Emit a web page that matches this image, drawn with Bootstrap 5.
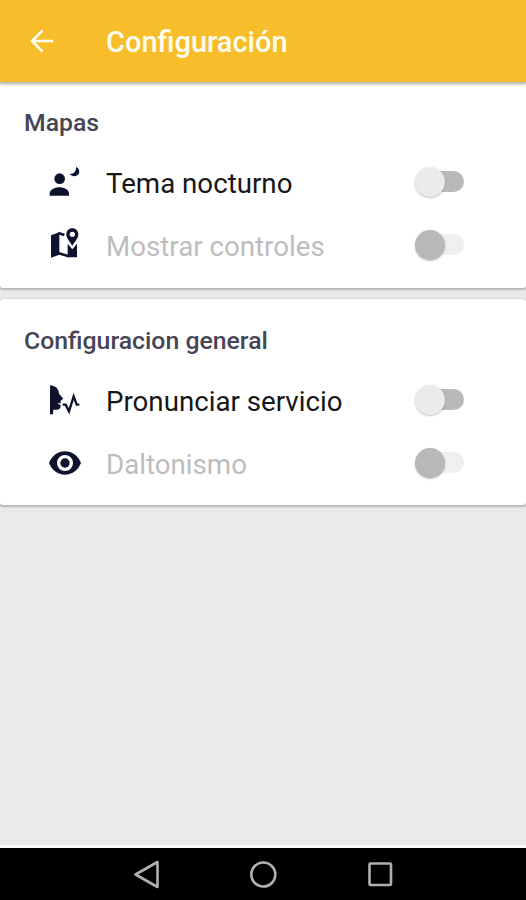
<!DOCTYPE html>
<html lang="es">
<head>
<meta charset="utf-8">
<meta name="viewport" content="width=device-width, initial-scale=1">
<title>Configuración</title>
<link href="https://cdn.jsdelivr.net/npm/bootstrap@5.3.0/dist/css/bootstrap.min.css" rel="stylesheet">
<style>
body{font-family:Roboto,sans-serif;background:#eaeaea;color:#171717;overflow:hidden}
.app-bar{height:82px;background:#f7bd2b;box-shadow:0 1px 3px 1px rgba(0,0,0,.33);padding:2px 0 0 24px;z-index:1}
.app-bar svg{width:36px;height:36px;margin-right:46px}
.app-title{font-size:29px;font-weight:500;color:#fffdf0;line-height:40px}
.settings{border:0;border-radius:3px;height:206px;padding-top:14px;box-shadow:0 1px 2px 1px rgba(0,0,0,.22)}
.settings-first{border-radius:0 0 3px 3px}
.settings + .settings{margin-top:11px;padding-top:15px}
.group-title{font-size:24.8px;font-weight:500;line-height:53px;height:55px;color:#454555;padding-left:24px}
.setting{height:63px;padding-left:46px;padding-right:62px}
.setting svg{width:36px;height:36px;margin-right:24px;fill:#0d132f;stroke:#0d132f;stroke-width:0}
.setting-label{font-size:27.7px;line-height:40px;padding-top:3px}
.setting.is-off{color:#bdbdbd}
.toggle{width:49px;height:31px;padding:5px 0 5px 8px;margin-bottom:2px;border:0;background:none}
.toggle-track{width:41px;height:21px;border-radius:11px;background:#b9b9b9}
.toggle-thumb{flex:none;width:30px;height:30px;margin-left:-8px;border-radius:50%;background:#ebebeb;box-shadow:0 1px 2px rgba(0,0,0,.25)}
.is-off .toggle-track{background:#efefef}
.is-off .toggle-thumb{background:#b8b8b8}
.sys-bar{height:55px;background:#000;border-top:3px solid #fafafa}
.sys-bar svg{width:100%;height:52px;fill:none;stroke:#b0b0b0;stroke-width:2.6}
</style>
</head>
<body class="d-flex flex-column vh-100">
<header class="app-bar d-flex align-items-center flex-shrink-0 position-relative">
  <svg viewBox="0 0 36 36" fill="none" stroke="#fffdf0" stroke-width="2.5" aria-hidden="true"><path d="M29 17H8M18.500 6.500L8 17l10.500 10.500"/></svg>
  <h1 class="app-title mb-0">Configuración</h1>
</header>
<main class="flex-grow-1">
  <section class="card settings settings-first">
    <h2 class="group-title mb-0">Mapas</h2>
    <div class="setting d-flex align-items-center">
      <svg viewBox="18 16 108 108" aria-hidden="true"><circle cx="59" cy="57" r="16"/><path d="M29 108v-6c0-12 15-19 29-19s29 7 29 19v6Z"/><path d="M108 22c12 5 13 19 4 25-8 5-19 2-23-5 12 2 20-7 19-20Z"/></svg>
      <span class="setting-label">Tema nocturno</span>
      <button class="toggle d-flex align-items-center ms-auto" type="button" role="switch" aria-checked="false" aria-label="Tema nocturno"><span class="toggle-track d-flex align-items-center"><span class="toggle-thumb"></span></span></button>
    </div>
    <div class="setting is-off d-flex align-items-center">
      <svg viewBox="21 22 108 108" aria-hidden="true"><path d="M36 44L61 35V102L36 111Z"/><path d="M58 37L76 43M59 98L90 107" fill="none" stroke-width="8"/><path d="M86 69l14 17 14-17v41H86Z"/><path fill-rule="evenodd" d="M100 20c-11 0-18 8-18 18 0 12 11 22 18 35 7-13 18-23 18-35 0-10-7-18-18-18Zm0 10a8 8 0 1 1 0 16 8 8 0 0 1 0-16Z" transform="translate(0 3)"/></svg>
      <span class="setting-label">Mostrar controles</span>
      <button class="toggle d-flex align-items-center ms-auto" type="button" role="switch" aria-checked="false" aria-label="Mostrar controles"><span class="toggle-track d-flex align-items-center"><span class="toggle-thumb"></span></span></button>
    </div>
  </section>
  <section class="card settings">
    <h2 class="group-title mb-0">Configuracion general</h2>
    <div class="setting d-flex align-items-center">
      <svg viewBox="18 13 108 108" aria-hidden="true"><path d="M30 20c16 1 26 9 27 25l13 15-8 6v8H52l10 6c0 9-3 13-10 13H40l-1 14h-9Z"/><path d="M68 78h9l10 20 14-45 9 25h8" fill="none" stroke-width="7"/></svg>
      <span class="setting-label">Pronunciar servicio</span>
      <button class="toggle d-flex align-items-center ms-auto" type="button" role="switch" aria-checked="false" aria-label="Pronunciar servicio"><span class="toggle-track d-flex align-items-center"><span class="toggle-thumb"></span></span></button>
    </div>
    <div class="setting is-off d-flex align-items-center">
      <svg viewBox="18 22 108 108" aria-hidden="true"><path fill-rule="evenodd" d="M27 73C36 51 54 38 75 38s39 13 48 35c-9 22-27 35-48 35S36 95 27 73Zm48-24a24 24 0 1 0 0 48 24 24 0 0 0 0-48Z"/><circle cx="75" cy="73" r="14"/></svg>
      <span class="setting-label">Daltonismo</span>
      <button class="toggle d-flex align-items-center ms-auto" type="button" role="switch" aria-checked="false" aria-label="Daltonismo"><span class="toggle-track d-flex align-items-center"><span class="toggle-thumb"></span></span></button>
    </div>
  </section>
</main>
<footer class="sys-bar flex-shrink-0">
  <svg viewBox="0 0 526 52" aria-hidden="true"><path d="M135.500 26.500L157.500 14V39Z" stroke-linejoin="round"/><circle cx="263.300" cy="26.500" r="12"/><rect x="369.500" y="15.500" width="21.500" height="21.500" rx="1"/></svg>
</footer>
<script src="https://cdn.jsdelivr.net/npm/bootstrap@5.3.0/dist/js/bootstrap.bundle.min.js"></script>
</body>
</html>
